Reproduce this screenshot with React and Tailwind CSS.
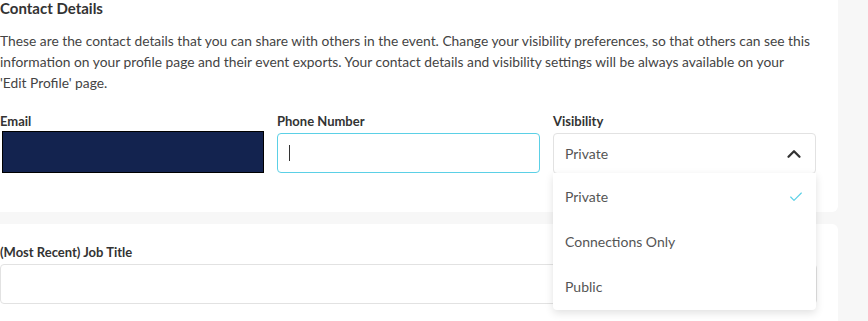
import { Check, ChevronUp } from 'lucide-react';

const options = ['Private', 'Connections Only', 'Public'];

const App = () => {
  return (
    <div className="h-[321px] overflow-hidden bg-[#f7f7f7] font-['Lato','Noto_Sans',sans-serif] text-[#3b3b3b]">
      <div className="flow-root w-[838px] h-[212px] bg-white rounded-br-[6px] pr-[21px]">
        <h2 className="text-[15px] font-bold leading-[20px] -mt-[2px] text-[#333]">Contact Details</h2>
        <p className="mt-[12px] text-[13.8px] leading-[21px] text-[#444]">
          These are the contact details that you can share with others in the event. Change your visibility preferences, so that others can see this information on your profile page and their event exports. Your contact details and visibility settings will be always available on your
          <br />
          'Edit Profile' page.
        </p>
        <div className="mt-[19px] grid grid-cols-[264px_263px_263px] gap-x-[13px]">
          <div>
            <label className="block text-[13px] font-bold leading-[18px] text-[#333]">Email</label>
            <div className="mt-[1px] ml-[2px] h-[42px] bg-[#13234f] border border-black" />
          </div>
          <div>
            <label className="block text-[13px] font-bold leading-[18px] text-[#333]">Phone Number</label>
            <div className="mt-[3px] h-[40px] rounded-[4px] border border-[#5bd0e6] flex items-center px-[11px]">
              <span className="block w-px h-[16px] bg-[#333]" />
            </div>
          </div>
          <div className="relative z-10">
            <label className="block text-[13px] font-bold leading-[18px] text-[#333]">Visibility</label>
            <div className="mt-[3px] h-[41px] rounded-[4px] border border-[#e2e2e2] flex items-center justify-between pl-[11px] pr-[10px] bg-white">
              <span className="text-[14px] text-[#555]">Private</span>
              <ChevronUp className="w-[22px] h-[22px] text-[#333]" strokeWidth={2.5} />
            </div>
            <ul className="absolute left-0 right-0 top-[61px] bg-white rounded-b-[4px] shadow-[0_3px_8px_rgba(0,0,0,0.12)] py-[1px]">
              {options.map((opt, i) => (
                <li key={opt} className="h-[45px] flex items-center justify-between pl-[12px] pr-[12px] text-[14px] text-[#555]">
                  {opt}
                  {i === 0 && <Check className="w-[16px] h-[16px] text-[#5bd0e6]" strokeWidth={1.75} />}
                </li>
              ))}
            </ul>
          </div>
        </div>
      </div>
      <div className="mt-[12px] w-[838px] h-[120px] bg-white rounded-tr-[6px] pr-[21px] pt-[19px]">
        <label className="block text-[13px] font-bold leading-[18px] text-[#333]">(Most Recent) Job Title</label>
        <div className="mt-[3px] h-[40px] rounded-[4px] border border-[#e2e2e2]" />
      </div>
    </div>
  );
};

export default App;
